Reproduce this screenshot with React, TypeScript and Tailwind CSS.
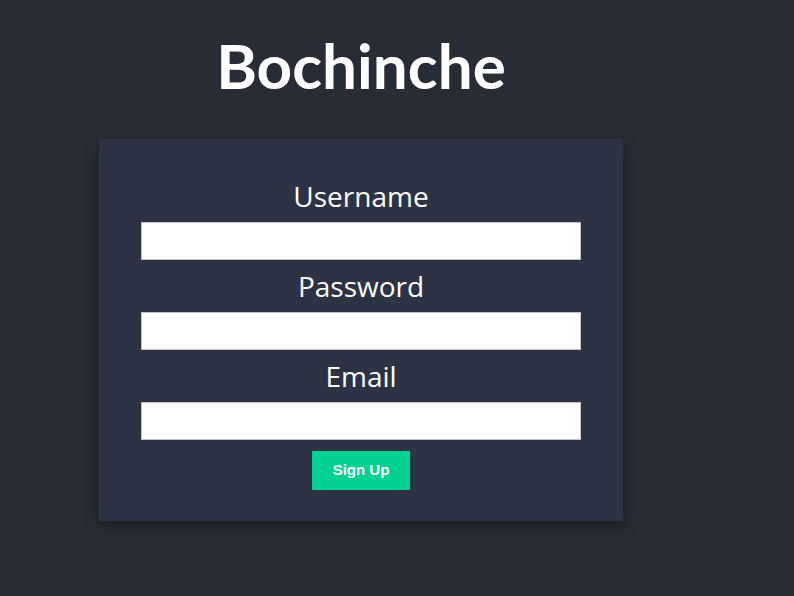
import { useState } from 'react';

const fields = [
  { name: 'username', label: 'Username', type: 'text' },
  { name: 'password', label: 'Password', type: 'password' },
  { name: 'email', label: 'Email', type: 'email' },
];

const App = () => {
  const [form, setForm] = useState<Record<string, string>>({
    username: '',
    password: '',
    email: '',
  });

  const handleChange = (e: React.ChangeEvent<HTMLInputElement>) => {
    const { name, value } = e.target;
    setForm((prev) => ({ ...prev, [name]: value }));
  };

  return (
    <div className="min-h-[596px] bg-[#282c34] pt-[34px] font-['Open_Sans',sans-serif] text-white">
      <div className="ml-[99px] w-[524px]">
        <h1 className="text-center font-['Lato',sans-serif] text-[62px] font-bold leading-none">
          Bochinche
        </h1>

        <form
          onSubmit={(e) => e.preventDefault()}
          className="mt-[43px] flex flex-col items-center bg-[#2d3345] px-[42px] pt-[31px] pb-[31px] shadow-[0_6px_14px_rgba(0,0,0,0.35)]"
        >
          {fields.map((f) => (
            <div key={f.name} className="flex w-full flex-col items-center">
              <label
                htmlFor={f.name}
                className="text-[28px] leading-[52px]"
              >
                {f.label}
              </label>
              <input
                id={f.name}
                name={f.name}
                type={f.type}
                value={form[f.name]}
                onChange={handleChange}
                className="h-[38px] w-full border border-[#c4c4c4] bg-white px-2 text-black outline-none"
              />
            </div>
          ))}

          <button
            type="submit"
            className="mt-[11px] h-[39px] w-[98px] bg-[#02d192] font-['Liberation_Sans',Arial,sans-serif] text-[15px] font-bold text-white"
          >
            Sign Up
          </button>
        </form>
      </div>
    </div>
  );
};

export default App;
